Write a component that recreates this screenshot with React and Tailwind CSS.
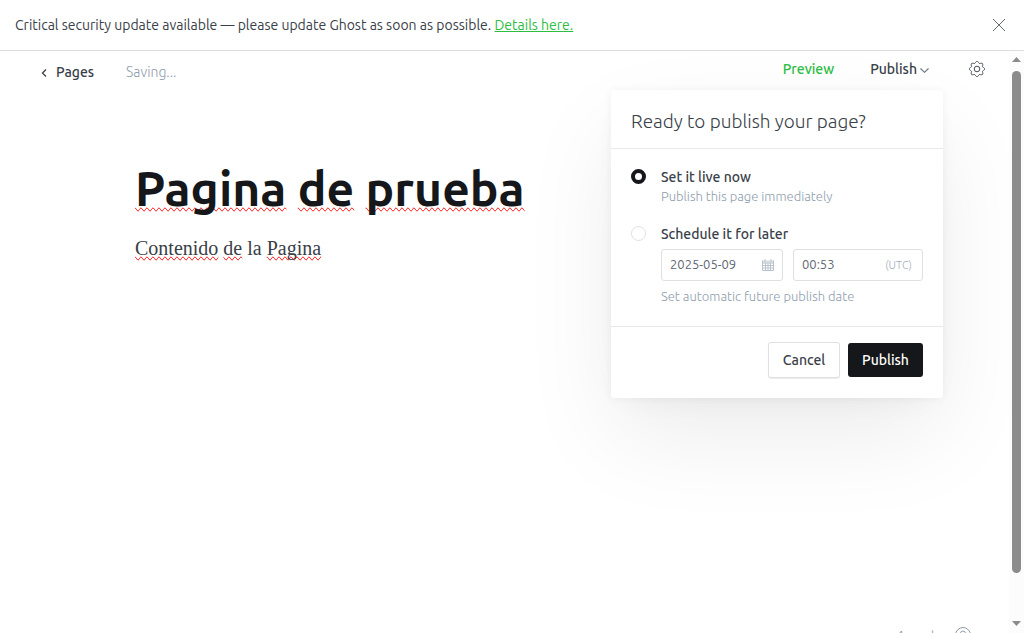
import { useState } from 'react';

function CloseIcon() {
  return (
    <svg className="size-3" viewBox="0 0 12 12" fill="none" stroke="#50575b" strokeWidth="0.9" aria-hidden="true">
      <path d="M0 0l12 12M12 0L0 12" />
    </svg>
  );
}

// Outline of a gear with eight rounded teeth, centred on (12, 12).
const GEAR_OUTLINE = `M${Array.from({ length: 96 }, (_, i) => {
  const angle = (i / 96) * Math.PI * 2;
  const radius = 10.3 + 1.3 * Math.cos(angle * 8);
  return `${(12 + radius * Math.cos(angle)).toFixed(2)} ${(12 + radius * Math.sin(angle)).toFixed(2)}`;
}).join('L')}Z`;

function GearIcon() {
  return (
    <svg className="size-4" viewBox="0 0 24 24" fill="none" stroke="#394047" strokeWidth="1.4" strokeLinejoin="round" aria-hidden="true">
      <path d={GEAR_OUTLINE} />
      <circle cx="12" cy="12" r="4.2" />
    </svg>
  );
}

function CalendarIcon() {
  return (
    <svg className="size-3 shrink-0" viewBox="0 0 12 12" fill="none" stroke="#b9c2cc" strokeWidth="1" aria-hidden="true">
      <path d="M0 1.500h12v2H0z" fill="#d5dae0" stroke="none" />
      <path d="M.5 1.500v10h11v-10M0 4h12M0 6.500h12M0 9h12M3.500 4v7.500M6 4v7.500M8.500 4v7.500M3 0v2.500M9 0v2.500" />
    </svg>
  );
}

function Misspelled({ children }) {
  return <span className="[text-decoration-line:spelling-error]">{children}</span>;
}

function Choice({ id, checked, onSelect, label, children }) {
  return (
    <div className="flex items-start gap-[15px]">
      <input
        id={id}
        type="radio"
        name="publish-time"
        checked={checked}
        onChange={onSelect}
        className="mt-[2px] size-[15px] shrink-0 appearance-none rounded-full border border-[#dde1e5] bg-white checked:border-4 checked:border-[#15171a]"
      />
      <div className="min-w-0 flex-1">
        <label htmlFor={id} className="block text-[14px] leading-5 font-medium text-[#394047]">{label}</label>
        {children}
      </div>
    </div>
  );
}

function PublishMenu() {
  const [mode, setMode] = useState('now');
  return (
    <section
      aria-label="Publish settings"
      className="absolute top-[39px] right-[66px] w-[332px] rounded-[3px] bg-white shadow-[0_0_8px_rgba(0,0,0,0.05),0_10px_30px_-12px_rgba(0,0,0,0.05),0_40px_90px_-4px_rgba(0,0,0,0.08)]"
    >
      <h2 className="border-b border-[#e6e9ee] px-5 pt-[19px] pb-[15px] text-[19px] leading-6 font-light text-[#394047]">
        Ready to publish your page?
      </h2>
      <div className="flex flex-col gap-[19px] border-b border-[#e6e9ee] px-5 pt-[18px] pb-[21px]">
        <Choice id="live" checked={mode === 'now'} onSelect={() => setMode('now')} label="Set it live now">
          <p className="text-[13px] leading-[18px] font-light text-[#8e9cac]">Publish this page immediately</p>
        </Choice>
        <Choice id="later" checked={mode === 'later'} onSelect={() => setMode('later')} label="Schedule it for later">
          <div className="mt-[5px] flex gap-[10px]">
            <div className="flex h-8 w-[122px] items-center rounded-[3px] border border-[#dddfe1] px-2">
              <input aria-label="Publish date" defaultValue="2025-05-09" className="w-full min-w-0 text-[13px] text-[#5d6772] outline-none" />
              <CalendarIcon />
            </div>
            <div className="flex h-8 flex-1 items-center rounded-[3px] border border-[#dddfe1] pr-[10px] pl-2">
              <input aria-label="Publish time" defaultValue="00:53" className="w-full min-w-0 text-[13px] text-[#5d6772] outline-none" />
              <span className="text-[11px] font-light text-[#a3adb8]">(UTC)</span>
            </div>
          </div>
          <p className="mt-[6px] text-[13px] leading-[18px] font-light text-[#8e9cac]">Set automatic future publish date</p>
        </Choice>
      </div>
      <div className="flex items-center justify-end gap-2 px-5 pt-[15px] pb-5 text-[14px] font-medium">
        <button type="button" className="h-9 w-[72px] rounded-[3px] border border-[#dde1e5] bg-white text-[#394047] shadow-[0_1px_1px_rgba(0,0,0,0.08)]">
          Cancel
        </button>
        <button type="button" className="h-[34px] w-[75px] rounded-[3px] bg-[#15171a] text-white">Publish</button>
      </div>
    </section>
  );
}

function Scrollbar() {
  return (
    <div className="flex w-[15px] shrink-0 flex-col items-center bg-[#fcfcfc] pt-[6px] pb-[7px]" aria-hidden="true">
      <svg className="h-[5px] w-[9px]" viewBox="0 0 9 5" fill="#8b8b8b"><path d="M0 5L4.500 0L9 5z" /></svg>
      <div className="mt-[9px] mb-12 w-[9px] flex-1 rounded-full bg-[#8b8b8b]" />
      <svg className="h-[5px] w-[9px]" viewBox="0 0 9 5" fill="#8b8b8b"><path d="M0 0h9L4.500 5z" /></svg>
    </div>
  );
}

export default function App() {
  return (
    <div className="flex h-screen flex-col overflow-hidden bg-white font-[Ubuntu,'Open_Sans',sans-serif] text-[#394047]">
      <aside className="flex h-[51px] shrink-0 items-center justify-between border-b border-[#dddddd] pr-[19px] pl-[15px] text-[14px]">
        <p>
          Critical security update available — please update Ghost as soon as possible.{' '}
          <a href="#details" className="text-[#2dbd42] underline">Details here.</a>
        </p>
        <button type="button" aria-label="Close"><CloseIcon /></button>
      </aside>
      <div className="flex min-h-0 flex-1">
        <div className="relative flex min-w-0 flex-1 flex-col overflow-hidden">
          <header className="flex h-9 shrink-0 items-center justify-between pr-6 pl-[41px] text-[14px]">
            <div className="flex items-center pt-[7px]">
              <a href="#pages" className="flex items-center gap-2 font-medium">
                <svg className="h-2 w-[7px]" viewBox="0 0 7 8" fill="none" stroke="#394047" strokeWidth="1.3" aria-hidden="true"><path d="M5 .5L1.500 4L5 7.500" /></svg>
                Pages
              </a>
              <span className="ml-8 font-light text-[#8e9cac]">Saving...</span>
            </div>
            <div className="flex items-center font-medium">
              <button type="button" className="text-[#2dbd42]">Preview</button>
              <button type="button" className="ml-9 flex items-center gap-[3px]">
                Publish
                <svg className="mt-[2px] h-[5px] w-[9px]" viewBox="0 0 9 5" fill="none" stroke="#6b757f" strokeWidth="1.1" aria-hidden="true"><path d="M.5 .5L4.500 4.300L8.500 .5" /></svg>
              </button>
              <button type="button" aria-label="Settings" className="ml-10"><GearIcon /></button>
            </div>
          </header>
          <PublishMenu />
          <main className="min-h-0 flex-1 px-[135px] pt-[71px]" spellCheck="false">
            <h1 className="text-[48px] leading-[60px] font-semibold text-[#15171a]">
              <Misspelled>Pagina</Misspelled> <Misspelled>de</Misspelled> <Misspelled>prueba</Misspelled>
            </h1>
            <p className="mt-[14px] font-['Liberation_Serif',serif] text-[20px] leading-8">
              <Misspelled>Contenido</Misspelled> <Misspelled>de</Misspelled> la <Misspelled>Pagina</Misspelled>
            </p>
          </main>
          <footer className="flex h-[6px] shrink-0 items-start justify-end gap-4 overflow-hidden pr-[38px] text-[12px] leading-4 font-light text-[#7c8b9a]">
            <span>4 words</span>
            <svg className="size-4" viewBox="0 0 16 16" fill="none" stroke="#8e9cac" aria-hidden="true">
              <circle cx="8" cy="8" r="7.500" />
              <path d="M5.500 6.500a2.500 2.500 0 1 1 2.500 2.500v1.500M8 12v1" />
            </svg>
          </footer>
        </div>
        <Scrollbar />
      </div>
    </div>
  );
}
